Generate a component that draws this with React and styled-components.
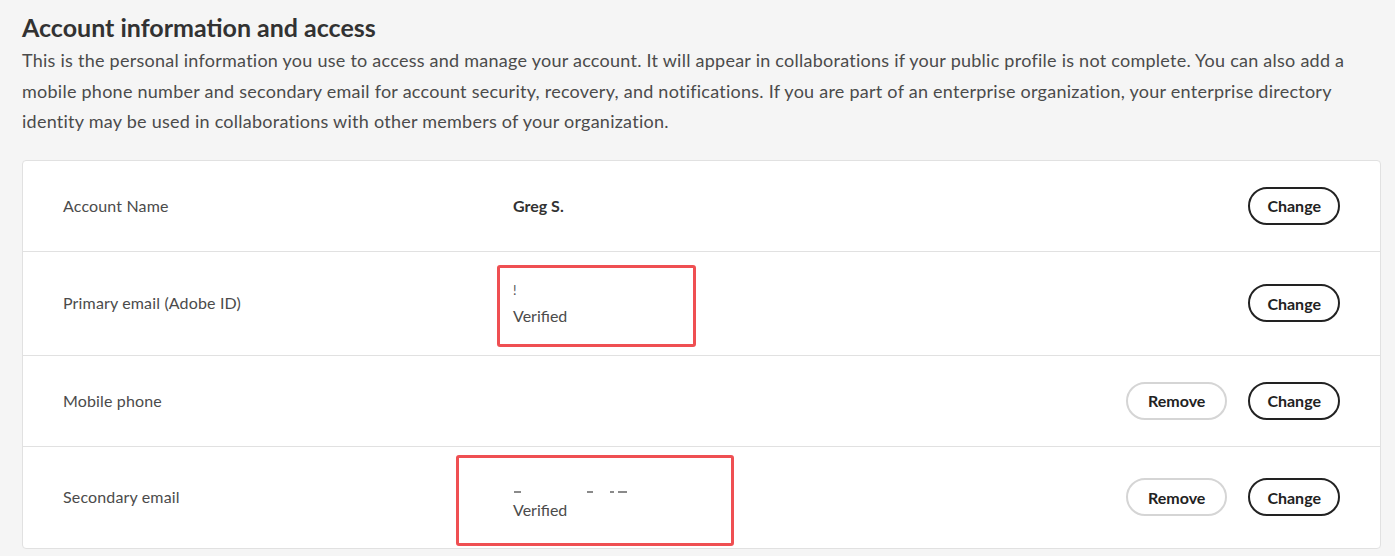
import styled, { createGlobalStyle } from 'styled-components';

const Global = createGlobalStyle`
  html, body {
    margin: 0;
    background: #f5f5f5;
  }
  body {
    font-family: Lato, "Noto Sans", sans-serif;
    color: #4b4b4b;
  }
`;

const Page = styled.main`
  padding: 12px 14px 0 22px;
`;

const Title = styled.h2`
  margin: 0;
  font-size: 25px;
  line-height: 30px;
  font-weight: 700;
  color: #323232;
`;

const Intro = styled.p`
  margin: 3px 0 0;
  font-size: 18px;
  line-height: 30.5px;
  letter-spacing: 0.25px;
  color: #4b4b4b;
`;

const Card = styled.section`
  margin-top: 23px;
  background: #fff;
  border: 1px solid #e1e1e1;
  border-radius: 4px;
`;

const Row = styled.div`
  position: relative;
  display: grid;
  grid-template-columns: 450px 1fr auto;
  align-items: center;
  min-height: ${(p) => p.h}px;
  padding: 0 40px;
  box-sizing: border-box;
  & + & {
    border-top: 1px solid #e1e1e1;
  }
`;

const Label = styled.div`
  font-size: 16px;
  line-height: 24px;
  letter-spacing: 0.15px;
  color: #4b4b4b;
`;

const Value = styled.div`
  display: flex;
  flex-direction: column;
  font-size: 16px;
  line-height: 25px;
  color: #4b4b4b;
`;

const Strong = styled.span`
  font-weight: 700;
  color: #323232;
`;

const Clip = styled.span`
  font-size: 13px;
  line-height: 25px;
  color: #555;
`;

const Scraps = styled.div`
  display: flex;
  align-items: flex-end;
  height: 25px;
  padding-bottom: 4px;
  box-sizing: border-box;
`;

const Scrap = styled.i`
  display: block;
  width: ${(p) => p.w}px;
  height: 2px;
  margin-left: ${(p) => p.gap}px;
  background: #8a8a8a;
`;

const Actions = styled.div`
  display: flex;
  gap: 21px;
`;

const Pill = styled.button`
  height: 38px;
  padding: 0 ${(p) => (p.quiet ? 20 : 17)}px;
  border-radius: 19px;
  border: 2px solid ${(p) => (p.quiet ? '#d5d5d5' : '#222')};
  background: #fff;
  color: #222;
  font-family: Lato, "Noto Sans", sans-serif;
  font-size: 16px;
  font-weight: 700;
`;

const Highlight = styled.div`
  position: absolute;
  left: ${(p) => p.x}px;
  top: ${(p) => p.y}px;
  width: ${(p) => p.w}px;
  height: ${(p) => p.h}px;
  border: 3px solid #ef4f52;
  border-radius: 3px;
  box-sizing: border-box;
  pointer-events: none;
`;

export default function App() {
  return (
    <>
      <Global />
      <Page>
        <Title>Account information and access</Title>
        <Intro>
          This is the personal information you use to access and manage your account. It will appear in
          collaborations if your public profile is not complete. You can also add a mobile phone number and
          secondary email for account security, recovery, and notifications. If you are part of an
          enterprise organization, your enterprise directory identity may be used in collaborations with
          other members of your organization.
        </Intro>
        <Card>
          <Row h={90}>
            <Label>Account Name</Label>
            <Value>
              <Strong>Greg S.</Strong>
            </Value>
            <Actions>
              <Pill>Change</Pill>
            </Actions>
          </Row>
          <Row h={104}>
            <Label>Primary email (Adobe ID)</Label>
            <Value>
              <Clip>!</Clip>
              <span>Verified</span>
            </Value>
            <Actions>
              <Pill>Change</Pill>
            </Actions>
            <Highlight x={474} y={13} w={199} h={82} />
          </Row>
          <Row h={91}>
            <Label>Mobile phone</Label>
            <Value />
            <Actions>
              <Pill quiet>Remove</Pill>
              <Pill>Change</Pill>
            </Actions>
          </Row>
          <Row h={102}>
            <Label>Secondary email</Label>
            <Value>
              <Scraps>
                <Scrap w={7} gap={1} />
                <Scrap w={6} gap={66} />
                <Scrap w={4} gap={17} />
                <Scrap w={9} gap={4} />
              </Scraps>
              <span>Verified</span>
            </Value>
            <Actions>
              <Pill quiet>Remove</Pill>
              <Pill>Change</Pill>
            </Actions>
            <Highlight x={433} y={8} w={278} h={91} />
          </Row>
        </Card>
      </Page>
    </>
  );
}
